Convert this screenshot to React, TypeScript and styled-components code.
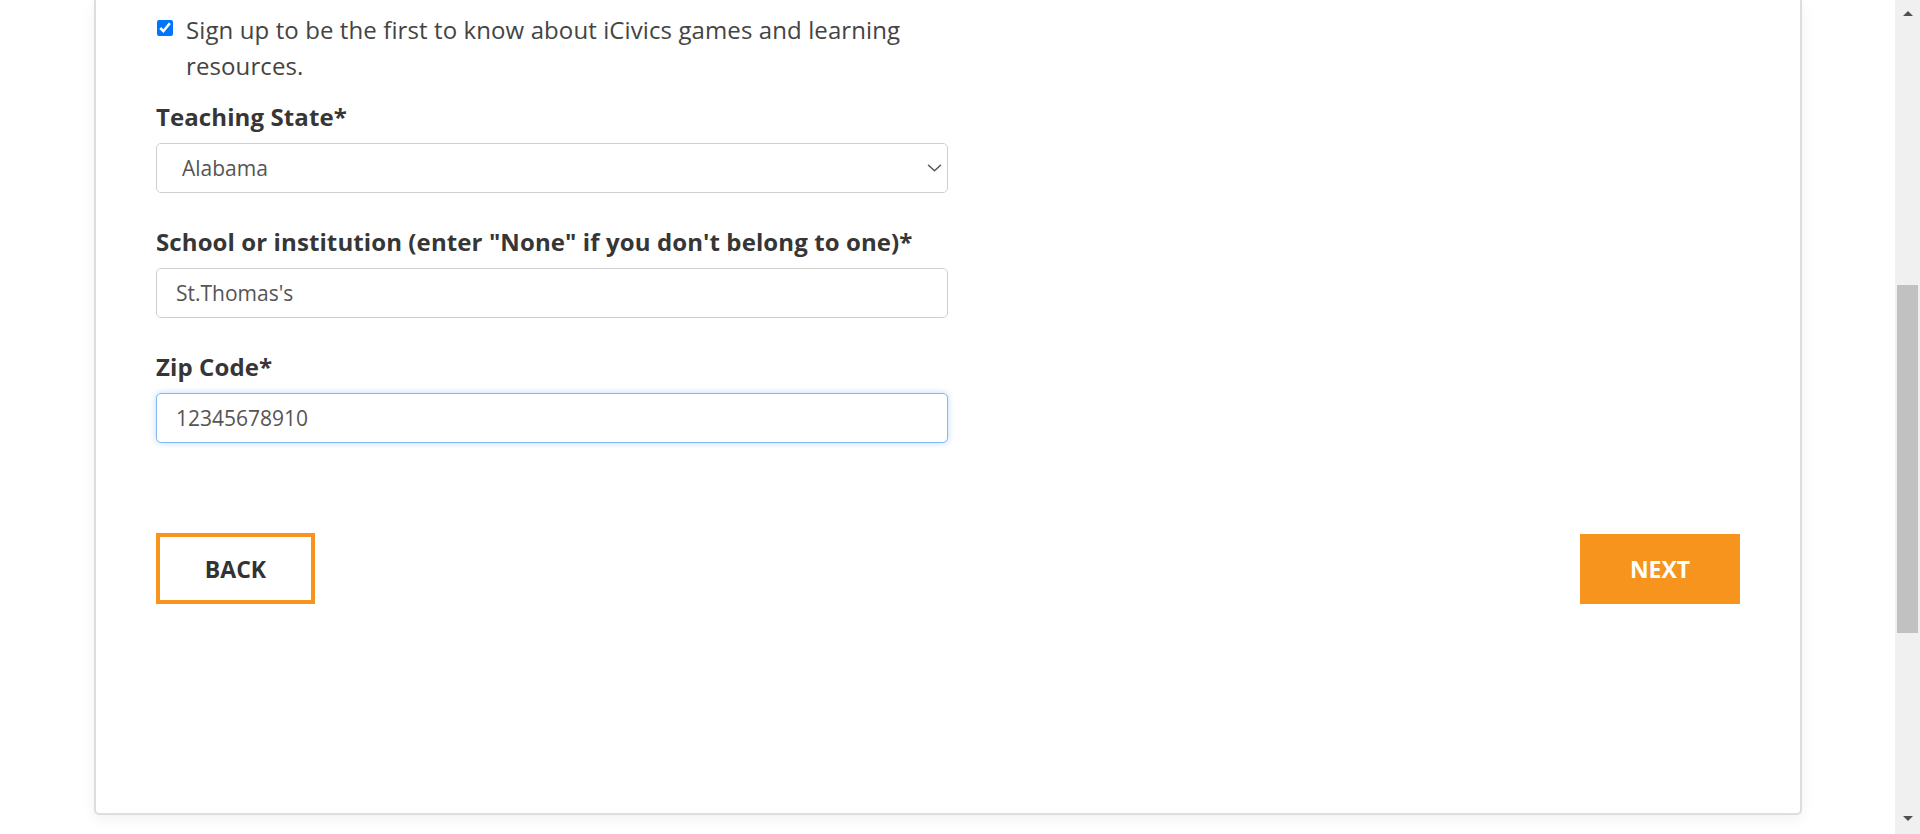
import React, { useState } from "react";
import styled, { createGlobalStyle } from "styled-components";

const GlobalStyle = createGlobalStyle`
  html, body {
    margin: 0;
    padding: 0;
    height: 100%;
    overflow: hidden;
    background: #ffffff;
  }
  body {
    font-family: "Open Sans", "Noto Sans", "Liberation Sans", sans-serif;
    color: #333333;
  }
  * {
    box-sizing: border-box;
  }
`;

const ORANGE = "#f7941e";

export default function App() {
  const [signup, setSignup] = useState<boolean>(true);
  const [state, setState] = useState<string>("Alabama");
  const [school, setSchool] = useState<string>("St.Thomas's");
  const [zip, setZip] = useState<string>("12345678910");

  return (
    <>
      <GlobalStyle />
      <Page>
        <Main>
          <Card>
            <Fields>
              <CheckRow>
                <Check
                  type="checkbox"
                  checked={signup}
                  onChange={(e: React.ChangeEvent<HTMLInputElement>) =>
                    setSignup(e.target.checked)
                  }
                />
                <CheckText>
                  Sign up to be the first to know about iCivics games and
                  learning resources.
                </CheckText>
              </CheckRow>

              <Field $first>
                <Label>Teaching State*</Label>
                <SelectWrap>
                  <Select
                    value={state}
                    onChange={(e: React.ChangeEvent<HTMLSelectElement>) =>
                      setState(e.target.value)
                    }
                  >
                    <option>Alabama</option>
                    <option>Alaska</option>
                    <option>Arizona</option>
                    <option>Arkansas</option>
                    <option>California</option>
                  </Select>
                  <Chevron width="15" height="8" viewBox="0 0 15 8">
                    <path
                      d="M1.5 1.2l6 5.6 6-5.6"
                      fill="none"
                      stroke="#555"
                      strokeWidth="1.5"
                      strokeLinecap="round"
                      strokeLinejoin="round"
                    />
                  </Chevron>
                </SelectWrap>
              </Field>

              <Field>
                <Label>
                  School or institution (enter "None" if you don't belong to
                  one)*
                </Label>
                <Input
                  type="text"
                  value={school}
                  onChange={(e: React.ChangeEvent<HTMLInputElement>) =>
                    setSchool(e.target.value)
                  }
                />
              </Field>

              <Field>
                <Label>Zip Code*</Label>
                <Input
                  type="text"
                  $focused
                  value={zip}
                  onChange={(e: React.ChangeEvent<HTMLInputElement>) =>
                    setZip(e.target.value)
                  }
                />
              </Field>
            </Fields>

            <ButtonRow>
              <BackButton type="button">BACK</BackButton>
              <NextButton type="button">NEXT</NextButton>
            </ButtonRow>
          </Card>
        </Main>

        <ScrollBar>
          <Arrow viewBox="0 0 10 6" width="10" height="6">
            <path d="M0 6L5 1l5 5z" fill="#505050" />
          </Arrow>
          <Track>
            <Thumb />
          </Track>
          <Arrow viewBox="0 0 10 6" width="10" height="6">
            <path d="M0 0l5 5 5-5z" fill="#505050" />
          </Arrow>
        </ScrollBar>
      </Page>
    </>
  );
}

const Page = styled.div`
  display: flex;
  height: 100vh;
  width: 100%;
`;

const Main = styled.div`
  flex: 1;
  min-width: 0;
  overflow: hidden;
  padding-left: 1px;
`;

const Card = styled.div`
  width: 1708px;
  margin: 0 auto;
  padding: 12px 60px 209px 60px;
  background: #ffffff;
  border: 2px solid #dddddd;
  border-top: none;
  border-radius: 0 0 5px 5px;
  box-shadow: 0 4px 14px rgba(0, 0, 0, 0.06);
`;

const Fields = styled.div`
  display: flex;
  flex-direction: column;
  width: 50%;
`;

const CheckRow = styled.div`
  display: flex;
  align-items: flex-start;
  gap: 13px;
`;

const Check = styled.input`
  flex: none;
  width: 16px;
  height: 16px;
  margin: 8px 0 0 1px;
  accent-color: #0075ff;
`;

const CheckText = styled.span`
  font-size: 24px;
  line-height: 36px;
  color: #444444;
  letter-spacing: 0.1px;
`;

const Field = styled.div<{ $first?: boolean }>`
  display: flex;
  flex-direction: column;
  margin-top: ${(p) => (p.$first ? "18px" : "34px")};
`;

const Label = styled.label`
  font-size: 24px;
  font-weight: 700;
  line-height: 30px;
  color: #363636;
  margin-bottom: 11px;
  white-space: nowrap;
  letter-spacing: 0.1px;
`;

const SelectWrap = styled.div`
  position: relative;
  width: 100%;
`;

const Select = styled.select`
  appearance: none;
  width: 100%;
  height: 50px;
  padding: 0 40px 0 25px;
  font-family: inherit;
  font-size: 21px;
  color: #555555;
  background: #ffffff;
  border: 1px solid #cfcfcf;
  border-radius: 5px;
  outline: none;
`;

const Chevron = styled.svg`
  position: absolute;
  right: 6px;
  top: 21px;
  pointer-events: none;
`;

const Input = styled.input<{ $focused?: boolean }>`
  width: 100%;
  height: 50px;
  padding: 0 19px;
  font-family: inherit;
  font-size: 21px;
  color: #555555;
  background: #ffffff;
  border: 1px solid ${(p) => (p.$focused ? "#86b7f0" : "#cfcfcf")};
  border-radius: 5px;
  outline: none;
  box-shadow: ${(p) =>
    p.$focused ? "0 0 6px rgba(102, 170, 240, 0.45)" : "none"};
`;

const ButtonRow = styled.div`
  display: flex;
  justify-content: space-between;
  align-items: center;
  margin-top: 90px;
`;

const BackButton = styled.button`
  width: 159px;
  height: 71px;
  border: 4px solid ${ORANGE};
  background: #ffffff;
  color: #333333;
  font-family: inherit;
  font-size: 23px;
  font-weight: 700;
  cursor: pointer;
`;

const NextButton = styled.button`
  width: 160px;
  height: 70px;
  border: none;
  background: ${ORANGE};
  color: #ffffff;
  font-family: inherit;
  font-size: 23px;
  font-weight: 700;
  cursor: pointer;
`;

const ScrollBar = styled.div`
  flex: none;
  width: 25px;
  height: 100%;
  background: #f0f0f0;
  display: flex;
  flex-direction: column;
  align-items: center;
  padding: 10px 0 12px;
`;

const Arrow = styled.svg`
  flex: none;
`;

const Track = styled.div`
  flex: 1;
  width: 100%;
  padding: 269px 2px 0;
`;

const Thumb = styled.div`
  height: 348px;
  background: #c1c1c1;
`;
